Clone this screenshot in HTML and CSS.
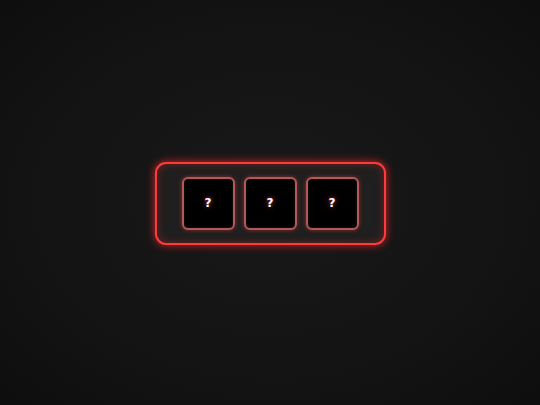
FILE: index.html
```html
<!DOCTYPE html>
<html>
<head>
<meta charset="utf-8">
<link rel="stylesheet" href="styles.css">
</head>
<body>
<div class="stage">
  <div class="reel">
    <div class="slot"><span class="sym">?</span></div>
    <div class="slot"><span class="sym">?</span></div>
    <div class="slot"><span class="sym">?</span></div>
  </div>
</div>
</body>
</html>
```
FILE: styles.css
```css
html, body {
  margin: 0;
  padding: 0;
  width: 540px;
  height: 405px;
  overflow: hidden;
}
body {
  background: radial-gradient(ellipse at 50% 50%, #191919 0%, #141414 55%, #0e0e0e 100%);
  font-family: "DejaVu Sans", sans-serif;
}
.stage {
  width: 540px;
  height: 405px;
  display: flex;
  align-items: center;
  justify-content: center;
}
.reel {
  display: flex;
  gap: 9px;
  padding: 13px 25px;
  border: 2px solid #ff3a3a;
  border-radius: 11px;
  background: #1f1f1f;
  box-shadow: 0 0 9px rgba(255, 40, 40, 0.8), inset 0 0 9px rgba(255, 40, 40, 0.35);
  margin-top: 1px;
}
.slot {
  width: 49px;
  height: 49px;
  border: 2px solid #b25858;
  border-radius: 6px;
  background: #000;
  display: flex;
  align-items: center;
  justify-content: center;
  box-shadow: 0 0 4px rgba(255, 60, 60, 0.5), inset 0 0 3px rgba(255, 255, 255, 0.12);
}
.sym {
  color: #fff;
  font-size: 12px;
  font-weight: bold;
  text-shadow: 0 0 5px rgba(255, 60, 60, 1);
}
```
